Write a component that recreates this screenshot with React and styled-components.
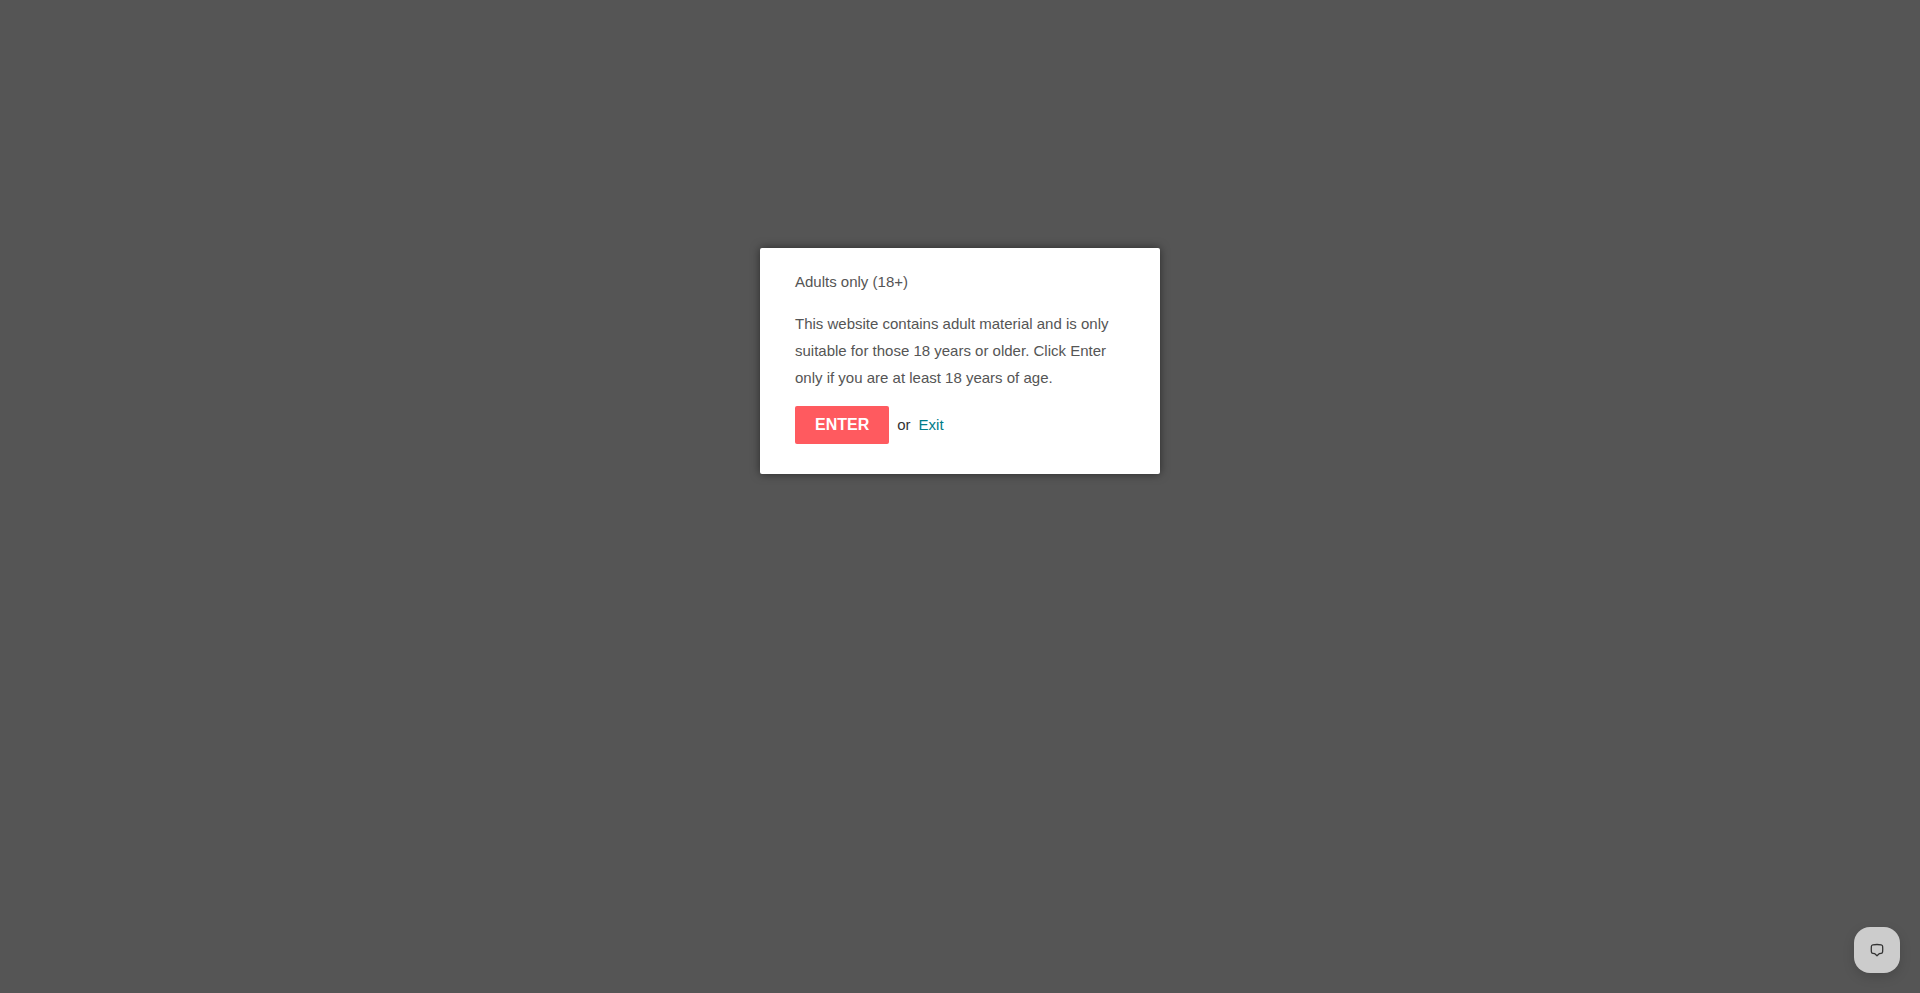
import React, { useState } from 'react'
import styled, { createGlobalStyle } from 'styled-components'

const App = () => {
	const [open, setOpen] = useState(true)

	return (
		<>
			<GlobalStyle />
			{ open && (
				<Overlay>
					<Dialog role="dialog" aria-modal="true" aria-labelledby="gate-title">
						<Title id="gate-title">Adults only (18+)</Title>
						<Description>
							This website contains adult material and is only suitable for those 18 years or older. Click Enter only if you are at least 18 years of age.
						</Description>
						<Actions>
							<EnterButton type="button" onClick={() => setOpen(false)}>ENTER</EnterButton>
							<span>or</span>
							<ExitLink href="#exit">Exit</ExitLink>
						</Actions>
					</Dialog>
				</Overlay>
			)}
			<ChatButton type="button" aria-label="Open chat">
				<ChatIcon />
			</ChatButton>
		</>
	)
}

export default App

const ChatIcon = () => (
	<svg width="14" height="14" viewBox="0 0 14 14" fill="none" stroke="#333" strokeWidth="1.3" strokeLinejoin="round">
		<path d="M2.8 1.8 Q7 1.2 11.2 1.8 Q12.5 2 12.6 3.2 Q12.9 6 12.6 8.8 Q12.4 10.1 11.2 10.3 L9.2 10.7 L7 12.7 L4.8 10.7 L2.8 10.3 Q1.6 10.1 1.4 8.8 Q1.1 6 1.4 3.2 Q1.5 2 2.8 1.8 Z" />
	</svg>
)

const GlobalStyle = createGlobalStyle`
	* {
		box-sizing: border-box;
	}

	body {
		margin: 0;
		background-color: #555;
		color: #333;
		font-family: "Liberation Sans", Arial, sans-serif;
		font-size: 15px;
		line-height: 27px;
	}
`

const Overlay = styled.div`
	display: flex;
	align-items: flex-start;
	justify-content: center;
	min-height: 100vh;
	padding: 25vh 16px 16px;
	background-color: #555;
`

const Dialog = styled.div`
	width: 100%;
	max-width: 400px;
	padding: 20px 35px 30px;
	border-radius: 2px;
	background-color: #fff;
	box-shadow: 0 0 10px rgba(0, 0, 0, 0.5);
`

const Title = styled.h1`
	margin: 0 0 15px;
	color: #555;
	font-size: 15px;
	font-weight: 400;
`

const Description = styled.p`
	margin: 0 0 15px;
	color: #555;
`

const Actions = styled.div`
	display: flex;
	align-items: baseline;
	gap: 8px;
`

const EnterButton = styled.button`
	height: 38px;
	padding: 0 20px;
	border: 0;
	border-radius: 2px;
	background-color: #ff5a5f;
	color: #fff;
	font-family: inherit;
	font-size: 16px;
	font-weight: 700;
	cursor: pointer;
`

const ExitLink = styled.a`
	color: #007c89;
	text-decoration: none;
`

const ChatButton = styled.button`
	position: fixed;
	right: 20px;
	bottom: 20px;
	display: flex;
	align-items: center;
	justify-content: center;
	width: 46px;
	height: 46px;
	padding: 0;
	border: 0;
	border-radius: 16px;
	background-color: #ccc;
	box-shadow: 0 4px 12px rgba(0, 0, 0, 0.15);
	cursor: pointer;
`
